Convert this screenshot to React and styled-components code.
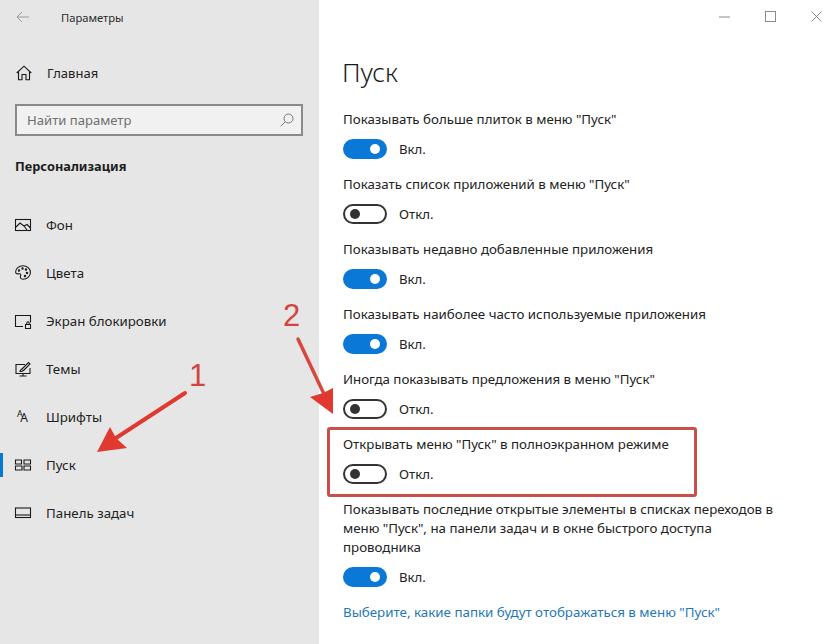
import React from "react";
import styled, { createGlobalStyle } from "styled-components";

const GlobalStyle = createGlobalStyle`
  html, body {
    margin: 0;
    padding: 0;
    background: #fff;
  }
  body {
    font-family: "Noto Sans", "Open Sans", sans-serif;
    color: #1a1a1a;
  }
`;

const Page = styled.div`
  position: relative;
  display: flex;
  width: 836px;
  height: 644px;
  overflow: hidden;
`;

const Sidebar = styled.aside`
  width: 319px;
  flex: none;
  background: #e6e6e6;
  display: flex;
  flex-direction: column;
`;

const TitleBar = styled.div`
  display: flex;
  align-items: center;
  height: 34px;
  padding-left: 16px;
  font-size: 11.2px;
  color: #2b2b2b;
`;

const BackIcon = styled.svg`
  width: 14px;
  height: 12px;
  margin-right: 31px;
`;

const HomeRow = styled.div`
  display: flex;
  align-items: center;
  height: 48px;
  margin-top: 15px;
  padding-left: 16px;
  gap: 15px;
  font-size: 13px;
  color: #222;
`;

const SearchBox = styled.div`
  display: flex;
  align-items: center;
  justify-content: space-between;
  box-sizing: border-box;
  width: 288px;
  height: 32px;
  margin: 7px 0 0 15px;
  padding: 0 7px 0 10px;
  background: #f1f1f1;
  border: 2px solid #8a8a8a;
  font-size: 13.1px;
  color: #6f6f6f;
`;

const SectionTitle = styled.h2`
  margin: 19px 0 12px 15px;
  font-size: 12.8px;
  line-height: 22px;
  font-weight: 700;
  color: #1c1c1c;
`;

const NavList = styled.nav`
  display: flex;
  flex-direction: column;
  margin-top: 12px;
`;

const NavItem = styled.div`
  position: relative;
  display: flex;
  align-items: center;
  height: 48px;
  padding-left: 15px;
  gap: 15px;
  font-size: 13.3px;
  color: #222;

  ${(p) =>
    p.$active &&
    `&::before {
      content: "";
      position: absolute;
      left: 0;
      top: 12px;
      width: 3px;
      height: 24px;
      background: #0b78d0;
    }`}
`;

const NavIcon = styled.svg`
  width: 16px;
  height: 16px;
  flex: none;
  fill: none;
  stroke: #1a1a1a;
  stroke-width: 1.1;
  overflow: visible;
`;

const Content = styled.main`
  position: relative;
  flex: 1;
  display: flex;
  flex-direction: column;
  padding-left: 24px;
`;

const WindowControls = styled.div`
  position: absolute;
  top: 11px;
  right: 14px;
  display: flex;
  gap: 35px;
`;

const ControlIcon = styled.svg`
  width: 11px;
  height: 11px;
  fill: none;
  stroke: #8a8a8a;
  stroke-width: 1;
`;

const PageTitle = styled.h1`
  margin: 51px 0 17px -1px;
  font-size: 26px;
  line-height: 42px;
  font-weight: 300;
  color: #1a1a1a;
`;

const Settings = styled.div`
  display: flex;
  flex-direction: column;
  gap: 16px;
`;

const Setting = styled.div`
  display: flex;
  flex-direction: column;
  gap: 10px;
`;

const Label = styled.div`
  width: 436px;
  font-size: 13.3px;
  line-height: 19px;
  color: #222;
`;

const ToggleRow = styled.div`
  display: flex;
  align-items: center;
  gap: 12px;
  font-size: 13.2px;
  line-height: 20px;
  color: #222;
`;

const Track = styled.span`
  box-sizing: border-box;
  display: flex;
  align-items: center;
  justify-content: ${(p) => (p.$on ? "flex-end" : "flex-start")};
  width: 44px;
  height: 20px;
  padding: 0 5px;
  border-radius: 10px;
  background: ${(p) => (p.$on ? "#0a78d7" : "#fff")};
  border: 2px solid ${(p) => (p.$on ? "#0a78d7" : "#333")};
`;

const Knob = styled.span`
  width: 10px;
  height: 10px;
  border-radius: 50%;
  background: ${(p) => (p.$on ? "#fff" : "#333")};
`;

const FolderLink = styled.a`
  margin-top: 16px;
  font-size: 13.35px;
  line-height: 19px;
  color: #1f78b4;
`;

const Highlight = styled.div`
  position: absolute;
  left: 327px;
  top: 427px;
  box-sizing: border-box;
  width: 370px;
  height: 70px;
  border: 3px solid #c8504b;
  border-radius: 3px;
`;

const Number = styled.span`
  position: absolute;
  left: ${(p) => p.$x}px;
  top: ${(p) => p.$y}px;
  font-family: "Liberation Sans", sans-serif;
  font-size: 31px;
  line-height: 36px;
  color: #d2453f;
`;

const ArrowLayer = styled.svg`
  position: absolute;
  left: 0;
  top: 0;
  width: 836px;
  height: 644px;
  pointer-events: none;
`;

const settings = [
  { label: 'Показывать больше плиток в меню "Пуск"', on: true },
  { label: 'Показать список приложений в меню "Пуск"', on: false },
  { label: "Показывать недавно добавленные приложения", on: true },
  { label: "Показывать наиболее часто используемые приложения", on: true },
  { label: 'Иногда показывать предложения в меню "Пуск"', on: false },
  { label: 'Открывать меню "Пуск" в полноэкранном режиме', on: false },
  {
    label:
      'Показывать последние открытые элементы в списках переходов в меню "Пуск", на панели задач и в окне быстрого доступа проводника',
    on: true,
  },
];

const navItems = [
  {
    name: "Фон",
    icon: (
      <>
        <rect x="0.5" y="2.5" width="15" height="11" />
        <path d="M1 10l4-4 4 3 3-1.5 3.5 3.5M9 9l3 4" />
      </>
    ),
  },
  {
    name: "Цвета",
    icon: (
      <>
        <path d="M8 .8C3.8.8.6 3.6.6 7c0 2 2.2 2 3.6 1.8 1.4-.2 2 .8 1.4 2-.6 1.400-.2 3.400 2.400 3.400 4 0 7.400-2.800 7.400-6.800C15.400 3.600 12.200.8 8 .8z" />
        <circle cx="4" cy="5.500" r=".7" />
        <circle cx="7.500" cy="3.500" r=".7" />
        <circle cx="11" cy="4.500" r=".7" />
        <circle cx="12" cy="8" r=".7" />
        <circle cx="10" cy="11" r=".7" />
      </>
    ),
  },
  {
    name: "Экран блокировки",
    icon: (
      <path d="M8 13.500H.5v-11h15v7M10.500 11.500h5v4h-5zM11.800 11.500V10a1.200 1.200 0 0 1 2.400 0v1.500" />
    ),
  },
  {
    name: "Темы",
    icon: (
      <path d="M10 3.500H1v9h14V7M8 12.500v2M4.500 15h7M5 10.500c.5-2 1.500-2 2-2.500l6.500-6.500 1.500 1.500L8.500 9.500c-.5.500-1.500 1-3.500 1z" />
    ),
  },
  {
    name: "Шрифты",
    icon: (
      <text x="2" y="8" fill="#1a1a1a" stroke="none">
        <tspan fontSize="9">A</tspan>
        <tspan fontSize="12" dx="-2.500" dy="5">A</tspan>
      </text>
    ),
  },
  {
    name: "Пуск",
    active: true,
    icon: <path d="M.5 3h6v4h-6zM9 3h6.500v4H9zM.5 9h6.500v4H.5zM9 9h6.500v4H9z" />,
  },
  {
    name: "Панель задач",
    icon: (
      <>
        <rect x="0.500" y="3" width="15" height="9.500" />
        <path d="M.5 10h15" />
      </>
    ),
  },
];

function Toggle({ on }) {
  return (
    <ToggleRow>
      <Track $on={on}>
        <Knob $on={on} />
      </Track>
      {on ? "Вкл." : "Откл."}
    </ToggleRow>
  );
}

export default function App() {
  return (
    <Page>
      <GlobalStyle />
      <Sidebar>
        <TitleBar>
          <BackIcon viewBox="0 0 14 12" fill="none" stroke="#9a9a9a" strokeWidth="1">
            <path d="M13 6H1M6 1L1 6l5 5" />
          </BackIcon>
          Параметры
        </TitleBar>
        <HomeRow>
          <NavIcon viewBox="0 0 16 16">
            <path d="M.7 8L8 1.200 15.300 8M2.500 6.500v8.300h3.500V9.500h4v5.300h3.500V6.500" />
          </NavIcon>
          Главная
        </HomeRow>
        <SearchBox>
          Найти параметр
          <svg width="14" height="14" viewBox="0 0 14 14" fill="none" stroke="#777" strokeWidth="1">
            <circle cx="8.500" cy="5.500" r="4.500" />
            <path d="M5.300 8.700L.7 13.300" />
          </svg>
        </SearchBox>
        <SectionTitle>Персонализация</SectionTitle>
        <NavList>
          {navItems.map((item) => (
            <NavItem key={item.name} $active={item.active}>
              <NavIcon viewBox="0 0 16 16">{item.icon}</NavIcon>
              {item.name}
            </NavItem>
          ))}
        </NavList>
      </Sidebar>
      <Content>
        <WindowControls>
          <ControlIcon viewBox="0 0 11 11">
            <path d="M0 6h11" />
          </ControlIcon>
          <ControlIcon viewBox="0 0 11 11">
            <rect x="0.500" y="0.500" width="10" height="10" />
          </ControlIcon>
          <ControlIcon viewBox="0 0 11 11">
            <path d="M.5.5l10 10M10.500.5l-10 10" />
          </ControlIcon>
        </WindowControls>
        <PageTitle>Пуск</PageTitle>
        <Settings>
          {settings.map((s) => (
            <Setting key={s.label}>
              <Label>{s.label}</Label>
              <Toggle on={s.on} />
            </Setting>
          ))}
        </Settings>
        <FolderLink>Выберите, какие папки будут отображаться в меню "Пуск"</FolderLink>
      </Content>
      <Highlight />
      <Number $x={189} $y={358}>1</Number>
      <Number $x={283} $y={298}>2</Number>
      <ArrowLayer viewBox="0 0 836 644">
        <path d="M185 393L116 438" stroke="#e0392f" strokeWidth="4" strokeLinecap="round" />
        <path d="M97 452L110 427 116 438 127 448z" fill="#e0392f" />
        <path d="M298 339L324 394" stroke="#d8473f" strokeWidth="3.500" strokeLinecap="round" />
        <path d="M333 414L310 397 323 393 333 388z" fill="#e0392f" />
      </ArrowLayer>
    </Page>
  );
}
